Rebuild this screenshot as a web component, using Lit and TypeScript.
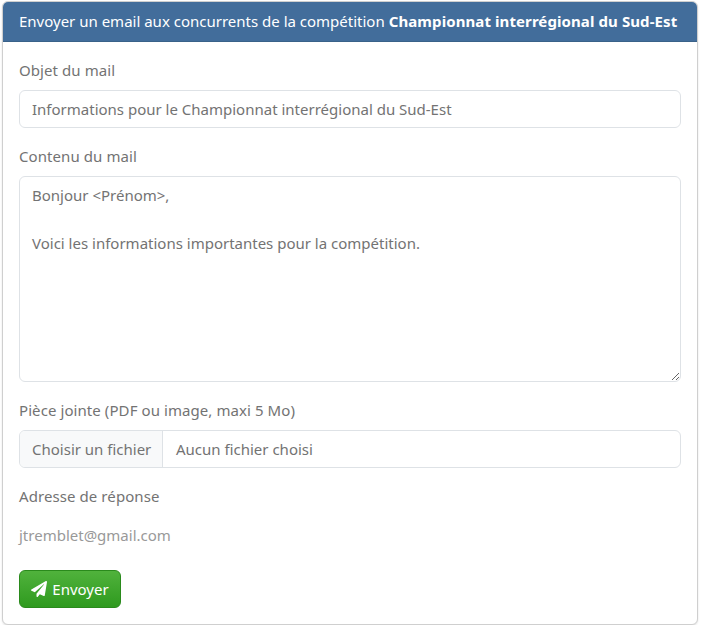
import { LitElement, html, css } from "lit";
import { customElement } from "lit/decorators.js";

@customElement("app-root")
export class AppRoot extends LitElement {
  static styles = css`
    :host {
      display: block;
      font-family: "Noto Sans", "Open Sans", sans-serif;
      font-size: 15px;
      line-height: 24px;
      color: #737373;
      padding: 1px 5px 0 2px;
    }
    .card {
      border: 1px solid #cfcfcf;
      border-radius: 6px;
      background: #fff;
      box-shadow: 0 1px 2px rgba(0, 0, 0, 0.12);
      overflow: hidden;
    }
    .head {
      background: #426d9b;
      color: #fff;
      margin: -1px -1px 0;
      padding: 0 17px;
      display: flex;
      align-items: center;
      white-space: nowrap;
      border-bottom: 1px solid #3a6289;
      box-sizing: border-box;
      height: 41px;
    }
    .head b { font-weight: 700; margin-left: 4px; letter-spacing: 0.09px; }
    .body {
      padding: 16px;
      display: flex;
      flex-direction: column;
      gap: 16px;
    }
    .field { display: flex; flex-direction: column; gap: 8px; }
    label { display: block; height: 24px; letter-spacing: 0.08px; }
    .ctl {
      box-sizing: border-box;
      width: 100%;
      border: 1px solid #dee2e6;
      border-radius: 6px;
      font: inherit;
      color: #737373;
      padding: 6px 12px;
      background: #fff;
      outline: none;
      margin: 0;
    }
    input.ctl { height: 38px; }
    textarea.ctl { height: 206px; display: block; resize: vertical; }
    .file { display: flex; height: 38px; padding: 0; overflow: hidden; align-items: stretch; }
    .file .pick {
      box-sizing: border-box;
      width: 143px;
      flex: none;
      white-space: nowrap;
      background: #f8f9fa;
      border-right: 1px solid #dee2e6;
      padding: 0 12px;
      display: flex;
      align-items: center;
    }
    .file .none { padding: 0 13px; display: flex; align-items: center; }
    .plain { height: 38px; display: flex; align-items: center; color: #999; }
    button {
      align-self: flex-start;
      box-sizing: border-box;
      height: 38px;
      width: 102px;
      border: 1px solid #2a8a1c;
      border-radius: 6px;
      background: linear-gradient(#50b23c, #2f9a1f);
      color: #fff;
      font: inherit;
      display: flex;
      align-items: center;
      justify-content: center;
      gap: 5px;
      padding: 0;
    }
    svg { width: 16px; height: 16px; fill: #fff; display: block; }
  `;

  render() {
    return html`
      <div class="card">
        <div class="head">Envoyer un email aux concurrents de la compétition <b>Championnat interrégional du Sud-Est</b></div>
        <div class="body">
          <div class="field">
            <label>Objet du mail</label>
            <input class="ctl" .value=${"Informations pour le Championnat interrégional du Sud-Est"} />
          </div>
          <div class="field">
            <label>Contenu du mail</label>
            <textarea class="ctl" .value=${"Bonjour <Prénom>,\n\nVoici les informations importantes pour la compétition."}></textarea>
          </div>
          <div class="field">
            <label>Pièce jointe (PDF ou image, maxi 5 Mo)</label>
            <div class="ctl file"><span class="pick">Choisir un fichier</span><span class="none">Aucun fichier choisi</span></div>
          </div>
          <div class="field">
            <label>Adresse de réponse</label>
            <div class="plain">jtremblet@gmail.com</div>
          </div>
          <button>
            <svg viewBox="0 0 512 512"><path d="M476 3L12 271c-18 10-16 36 3 44l106 44 288-254c6-5 13 3 9 8L176 408v81c0 23 28 32 42 15l64-78 125 52c14 6 31-3 33-18L512 28c3-20-19-35-36-25z"/></svg>
            Envoyer
          </button>
        </div>
      </div>
    `;
  }
}
